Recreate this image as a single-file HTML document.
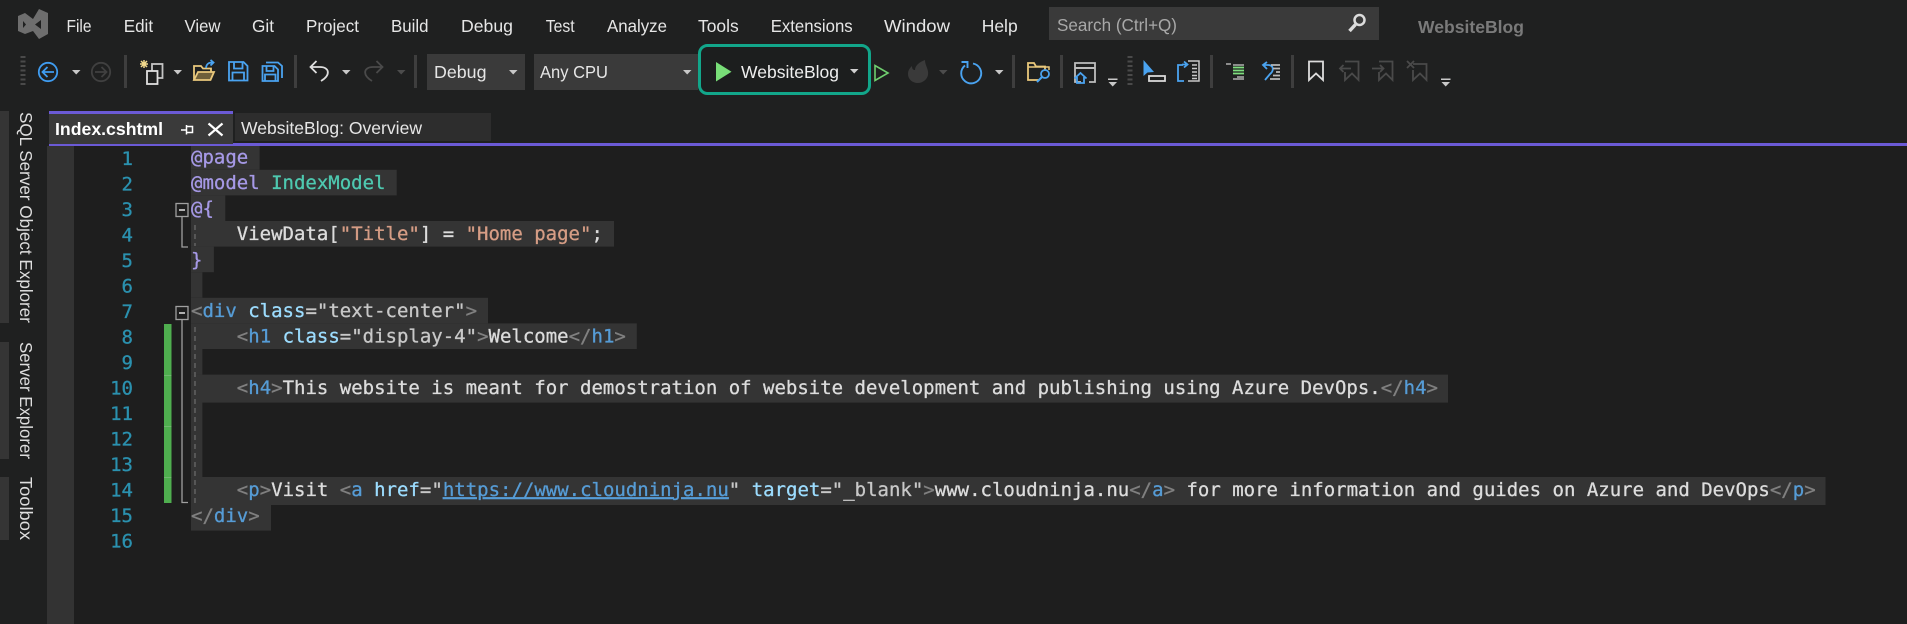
<!DOCTYPE html>
<html lang="en"><head><meta charset="utf-8"><title>WebsiteBlog</title>
<style>
html,body{margin:0;padding:0;background:#1f2020;width:1907px;height:624px;overflow:hidden}
svg{display:block}
.u{font-family:"Liberation Sans",sans-serif;font-size:17.5px;fill:#e6e6e6}
.m{font-family:"DejaVu Sans Mono","Liberation Mono",monospace;font-size:19px;fill:#dcdcdc;stroke:#dcdcdc;stroke-width:.3px}
.n{fill:#2b91af;stroke:#2b91af;text-anchor:end}
.t{fill:#808080;stroke:#808080}.k{fill:#569cd6;stroke:#569cd6}.a{fill:#9cdcfe;stroke:#9cdcfe}.s{fill:#c8c8c8;stroke:#c8c8c8}.r{fill:#a699e6;stroke:#a699e6}.c{fill:#4ec9b0;stroke:#4ec9b0}.q{fill:#d69d85;stroke:#d69d85}.l{fill:#569cd6;stroke:#569cd6;text-decoration:underline}
.sel{fill:#343434}
</style></head><body>
<svg xmlns="http://www.w3.org/2000/svg" width="1907" height="624" viewBox="0 0 1907 624">
<rect width="1907" height="624" fill="#1f2020"/>
<!-- logo -->
<path fill="#6e6e6e" fill-rule="evenodd" d="M39 9L48 13V34L39 39L33 31L25 34L18 31V16L25 13L33 19ZM23 21V28L26 24.500ZM41 20L35 24.500L41 29Z"/>
<!-- menu -->
<g class="u">
<text x="66.500" y="32" textLength="25" lengthAdjust="spacingAndGlyphs">File</text>
<text x="123.700" y="32" textLength="29.400" lengthAdjust="spacingAndGlyphs">Edit</text>
<text x="184.500" y="32" textLength="36" lengthAdjust="spacingAndGlyphs">View</text>
<text x="252" y="32" textLength="22" lengthAdjust="spacingAndGlyphs">Git</text>
<text x="306" y="32" textLength="53" lengthAdjust="spacingAndGlyphs">Project</text>
<text x="391" y="32" textLength="37.500" lengthAdjust="spacingAndGlyphs">Build</text>
<text x="461" y="32" textLength="52" lengthAdjust="spacingAndGlyphs">Debug</text>
<text x="545.700" y="32" textLength="29" lengthAdjust="spacingAndGlyphs">Test</text>
<text x="607" y="32" textLength="60" lengthAdjust="spacingAndGlyphs">Analyze</text>
<text x="698" y="32" textLength="40.700" lengthAdjust="spacingAndGlyphs">Tools</text>
<text x="770.700" y="32" textLength="82" lengthAdjust="spacingAndGlyphs">Extensions</text>
<text x="884" y="32" textLength="66" lengthAdjust="spacingAndGlyphs">Window</text>
<text x="981.700" y="32" textLength="36" lengthAdjust="spacingAndGlyphs">Help</text>
</g>
<!-- search -->
<rect x="1049" y="7" width="330" height="33" fill="#3a3a3a"/>
<text class="u" x="1057" y="31" textLength="120" lengthAdjust="spacingAndGlyphs" style="fill:#a8a8a8">Search (Ctrl+Q)</text>
<circle cx="1359.500" cy="20" r="5" fill="none" stroke="#dcdcdc" stroke-width="2.500"/>
<path d="M1355.500 24.500L1349.500 31" stroke="#dcdcdc" stroke-width="3.500" fill="none"/>
<text class="u" x="1418" y="33" textLength="106" lengthAdjust="spacingAndGlyphs" style="fill:#7a7a7a;font-weight:bold">WebsiteBlog</text>

<!-- toolbar grips -->
<g fill="none" stroke="#4a4a4a" stroke-width="5" stroke-dasharray="2 2.500">
<path d="M23 56V85"/><path d="M1130 56V85"/>
</g>
<!-- separators -->
<g fill="#3e3e3e">
<rect x="124" y="55" width="3" height="33"/><rect x="294" y="55" width="3" height="33"/><rect x="414" y="55" width="3" height="33"/>
<rect x="1012" y="55" width="3" height="33"/><rect x="1060" y="55" width="3" height="33"/><rect x="1210" y="55" width="3" height="33"/><rect x="1291" y="55" width="3" height="33"/>
</g>
<!-- back / forward -->
<g fill="none" stroke-width="1.800">
<circle cx="48" cy="72" r="9.200" stroke="#3f9cf0"/><path d="M54 72H43M47.500 67L42.500 72L47.500 77" stroke="#3f9cf0"/>
<circle cx="101" cy="72" r="9.200" stroke="#404040"/><path d="M95 72H106M101.500 67L106.500 72L101.500 77" stroke="#404040"/>
</g>
<!-- dropdown arrows -->
<g fill="#c8c8c8">
<path d="M72 70H80.500L76.200 74.500Z"/><path d="M173.500 70H182L177.700 74.500Z"/><path d="M342 70H350.500L346.200 74.500Z"/>
<path d="M995 70H1003.500L999.200 74.500Z"/>
<path d="M397 70H405.500L401.200 74.500Z" fill="#4c4c4c"/><path d="M939 70H947.500L943.200 74.500Z" fill="#4c4c4c"/>
<path d="M1108 78.500H1117.500V80H1108ZM1108.500 82H1117L1112.700 86.500Z"/><path d="M1441 78.500H1450.500V80H1441ZM1441.500 82H1450L1445.700 86.500Z"/>
</g>
<!-- new project -->
<g fill="none" stroke="#c4c4c4" stroke-width="1.800">
<rect x="152" y="64" width="10.500" height="14"/><rect x="147" y="71" width="10.500" height="13" fill="#1f2020" stroke="#e0e0e0"/>
</g>
<path d="M144 60V68M140 64H148M141 61L147 67M147 61L141 67" stroke="#f2d98c" stroke-width="1.500"/>
<!-- open folder -->
<path d="M194 80V66H201L203 68.500H211V72" fill="none" stroke="#e9c87c" stroke-width="1.800"/>
<path d="M194 80L198 72H214L210.500 80Z" fill="#6f5f3a" stroke="#e9c87c" stroke-width="1.800"/>
<path d="M206 68C206.500 63.500 209 62.500 213 62.500M210.500 60L213.500 62.500L210.500 65.500" fill="none" stroke="#4aa3f0" stroke-width="1.800"/>
<!-- save -->
<g fill="none" stroke="#4aa3f0" stroke-width="1.800">
<path d="M229 62H243.500L247.500 66V80.500H229Z"/><path d="M234 62V68.500H242.500V62M232.500 80.500V72.500H244V80.500"/>
<path d="M262.500 66H274.500L278 69.500V81H262.500Z"/><path d="M266.500 66V71H273.500V66M265 81V74.500H275.500V81"/>
<path d="M266 62.500H278L282 66V78"/>
</g>
<!-- undo / redo -->
<path d="M316.500 61L310.500 67L316.500 73M311 67H320C329.500 67 331 75 321 81" fill="none" stroke="#dedede" stroke-width="1.800"/>
<path d="M376.500 61L382.500 67L376.500 73M382 67H373C363.500 67 362 75 372 81" fill="none" stroke="#4a4a4a" stroke-width="1.800"/>
<!-- config dropdowns -->
<rect x="427" y="54" width="98" height="36" fill="#3a3a3a"/>
<rect x="534" y="54" width="164" height="36" fill="#3a3a3a"/>
<path d="M509 70H517.500L513.200 74.500Z" fill="#c8c8c8"/><path d="M683 70H691.500L687.200 74.500Z" fill="#c8c8c8"/>
<text class="u" x="434" y="78" textLength="52.500" lengthAdjust="spacingAndGlyphs">Debug</text>
<text class="u" x="540" y="78" textLength="68" lengthAdjust="spacingAndGlyphs">Any CPU</text>
<!-- run button -->
<rect x="699.500" y="45.500" width="170" height="48" rx="8" fill="#1c1e1e" stroke="#12a68a" stroke-width="3"/>
<path d="M716 62V81.500L731.500 71.700Z" fill="#78de78"/>
<text class="u" x="741" y="78" textLength="98" lengthAdjust="spacingAndGlyphs" style="fill:#eeeeee">WebsiteBlog</text>
<path d="M850 69H858.500L854.200 73.500Z" fill="#d0d0d0"/>
<path d="M875 65.500V80.500L888 73Z" fill="none" stroke="#6fcf6f" stroke-width="1.600"/>
<!-- flame -->
<path d="M925 60C925 66 929 69 928 75C927 80 922 83 918 83C912 83 908 79 908 74C908 70 910 68 912 66C912 69 913 70 915 70C915 66 919 62 925 60Z" fill="#3a3a3a"/>
<!-- refresh -->
<path d="M965 65.500A10 10 0 1 0 973 63.500" fill="none" stroke="#4aa3f0" stroke-width="1.900"/>
<path d="M961.500 62H967.500V68" fill="none" stroke="#4aa3f0" stroke-width="1.900"/>
<!-- folder search -->
<path d="M1045 72V66.500H1036L1034 63H1028V80H1039" fill="none" stroke="#e9c87c" stroke-width="1.800"/>
<path d="M1028 67H1049V70" fill="none" stroke="#e9c87c" stroke-width="1.500"/>
<circle cx="1045" cy="74" r="4" fill="#1f2020" stroke="#4aa3f0" stroke-width="1.800"/><path d="M1042 77L1037 82" stroke="#4aa3f0" stroke-width="2"/>
<!-- home window -->
<path d="M1081 82H1075V63H1095V82H1089" fill="none" stroke="#bdbdbd" stroke-width="1.800"/><path d="M1075 68H1095" stroke="#bdbdbd" stroke-width="2"/>
<path d="M1074.500 78.500L1080.500 73L1086.500 78.500M1077 77V83H1084V77" fill="none" stroke="#4aa3f0" stroke-width="1.800"/>
<!-- pointer -->
<path d="M1143.500 60V76L1147.500 72.500L1154 72Z" fill="#4aa3f0"/>
<rect x="1149" y="76" width="16" height="5" fill="none" stroke="#d8d8d8" stroke-width="1.800"/>
<!-- swap -->
<path d="M1183 65H1178V81H1184" fill="none" stroke="#4aa3f0" stroke-width="1.800"/>
<path d="M1186 64.500L1182 64.500M1184 61.500L1187.500 64.500L1184 67.500" fill="none" stroke="#4aa3f0" stroke-width="1.800"/>
<path d="M1188 61H1199V81H1188" fill="none" stroke="#c8c8c8" stroke-width="1.500"/>
<path d="M1192 65H1197M1192 68.500H1197M1192 72H1197M1192 75.500H1197M1192 78.500H1197" stroke="#c8c8c8" stroke-width="1.500"/>
<!-- indent -->
<path d="M1226 64H1231M1233 65H1244M1233 79H1244M1237 77H1244" stroke="#b0b0b0" stroke-width="1.600"/>
<path d="M1233 67.500H1244M1233 70.500H1244M1233 73.500H1244" stroke="#7ede7e" stroke-width="1.700"/>
<!-- undo list -->
<path d="M1267 62L1263 65L1267 69M1263 65H1268C1274 65 1274 71 1270 74L1265 80" fill="none" stroke="#4aa3f0" stroke-width="1.800"/>
<path d="M1271 65H1280M1273 68.500H1280M1276 72H1280M1273 75.500H1280M1270 79H1280" stroke="#b8b8b8" stroke-width="1.700"/>
<!-- bookmarks -->
<path d="M1309 61.500H1323V80L1316 73.500L1309 80Z" fill="none" stroke="#dcdcdc" stroke-width="1.800"/>
<g fill="none" stroke="#4a4a4a" stroke-width="1.800">
<path d="M1345 61.500H1358.500V80L1352 73.500L1345 80V72"/><path d="M1340 68.500H1351M1343.500 65L1340 68.500L1343.500 72"/>
<path d="M1379 61.500H1392.500V80L1386 73.500L1379 80V72"/><path d="M1372 68.500H1383M1380 65L1383.500 68.500L1380 72"/>
<path d="M1413 64H1426.500V80L1420 73.500L1413 80V70"/><path d="M1407 61L1414 68M1414 61L1407 68"/>
</g>

<!-- tab strip -->
<rect x="49" y="111" width="184" height="34" fill="#3a3a3a"/>
<rect x="49" y="111" width="184" height="3" fill="#6b5ad6"/>
<rect x="49" y="144" width="184" height="2" fill="#6b5ad6"/>
<rect x="235" y="113" width="256" height="28" fill="#2d2d2d"/>
<rect x="233" y="143" width="1674" height="3" fill="#6b5ad6"/>
<text class="u" x="55" y="135" textLength="108" lengthAdjust="spacingAndGlyphs" style="font-weight:bold;fill:#fff">Index.cshtml</text>
<text class="u" x="241" y="134" textLength="181" lengthAdjust="spacingAndGlyphs">WebsiteBlog: Overview</text>
<path d="M181 130H186.500M186.500 125V134.500M186.500 126.500H192.500V132.500H186.500" fill="none" stroke="#ffffff" stroke-width="1.500"/>
<path d="M208.500 123.500L222.500 135.500M222.500 123.500L208.500 135.500" stroke="#ffffff" stroke-width="2.200"/>

<!-- side tabs -->
<g fill="#353535"><rect x="0" y="111" width="9" height="212"/><rect x="0" y="342" width="9" height="117"/><rect x="0" y="477" width="9" height="63"/></g>
<g class="u" style="font-size:17.5px;fill:#dedede">
<text transform="translate(20 112) rotate(90)" textLength="211" lengthAdjust="spacingAndGlyphs">SQL Server Object Explorer</text>
<text transform="translate(20 342) rotate(90)" textLength="117" lengthAdjust="spacingAndGlyphs">Server Explorer</text>
<text transform="translate(20 477) rotate(90)" textLength="63" lengthAdjust="spacingAndGlyphs">Toolbox</text>
</g>

<!-- editor -->
<rect x="47" y="146" width="27" height="478" fill="#333333"/>
<rect x="74" y="146" width="1833" height="478" fill="#1e1e1e"/>
<!-- selection -->
<g class="sel">
<rect x="191" y="146" width="68.600" height="23.800"/>
<rect x="191" y="169.800" width="205.700" height="25.600"/>
<rect x="191" y="195.400" width="34.300" height="25.600"/>
<rect x="191" y="221" width="423" height="25.600"/>
<rect x="191" y="246.600" width="22.900" height="25.600"/>
<rect x="191" y="272.200" width="11.400" height="25.600"/>
<rect x="191" y="297.800" width="297" height="25.600"/>
<rect x="191" y="323.400" width="445.800" height="25.600"/>
<rect x="191" y="349" width="11.400" height="25.600"/>
<rect x="191" y="374.600" width="1257" height="28"/>
<rect x="191" y="400.200" width="11.400" height="76.800"/>
<rect x="191" y="477" width="1634.500" height="28"/>
<rect x="191" y="502.600" width="80" height="28"/>
</g>
<!-- change bar -->
<rect x="164" y="324" width="7.500" height="179" fill="#4fae4f"/>
<g fill="#6fb86f"><rect x="164" y="375" width="7.500" height="1"/><rect x="164" y="426" width="7.500" height="1"/><rect x="164" y="477" width="7.500" height="1"/></g>
<!-- fold -->
<g fill="none" stroke="#a0a0a0" stroke-width="1.300">
<rect x="176" y="203.500" width="12" height="13"/><rect x="176" y="306.500" width="12" height="13"/>
<path d="M182 217V247H188"/><path d="M182 320V502.500H188"/>
</g>
<path d="M179 210H185M179 313H185" stroke="#e0e0e0" stroke-width="1.500"/>
<path d="M195 225V246M195 327V503" stroke="#6a6a6a" stroke-width="1.300" stroke-dasharray="5 4" fill="none"/>

<!-- line numbers -->
<g class="m">
<text class="n" x="133" y="165">1</text>
<text class="n" x="133" y="190.500">2</text>
<text class="n" x="133" y="216">3</text>
<text class="n" x="133" y="241.500">4</text>
<text class="n" x="133" y="267">5</text>
<text class="n" x="133" y="292.500">6</text>
<text class="n" x="133" y="318">7</text>
<text class="n" x="133" y="343.500">8</text>
<text class="n" x="133" y="369">9</text>
<text class="n" x="133" y="394.500">10</text>
<text class="n" x="133" y="420">11</text>
<text class="n" x="133" y="445.500">12</text>
<text class="n" x="133" y="471">13</text>
<text class="n" x="133" y="496.500">14</text>
<text class="n" x="133" y="522">15</text>
<text class="n" x="133" y="547.500">16</text>
</g>
<!-- code -->
<g class="m">
<text x="191" y="163.400"><tspan class="r">@page</tspan></text>
<text x="191" y="189"><tspan class="r">@model</tspan> <tspan class="c">IndexModel</tspan></text>
<text x="191" y="214.600"><tspan class="r">@{</tspan></text>
<text x="236.800" y="240.200">ViewData[<tspan class="q">"Title"</tspan>] = <tspan class="q">"Home page"</tspan>;</text>
<text x="191" y="265.800"><tspan class="r">}</tspan></text>
<text x="191" y="317"><tspan class="t">&lt;</tspan><tspan class="k">div</tspan> <tspan class="a">class</tspan><tspan class="s">="text-center"</tspan><tspan class="t">&gt;</tspan></text>
<text x="236.800" y="342.600"><tspan class="t">&lt;</tspan><tspan class="k">h1</tspan> <tspan class="a">class</tspan><tspan class="s">="display-4"</tspan><tspan class="t">&gt;</tspan>Welcome<tspan class="t">&lt;/</tspan><tspan class="k">h1</tspan><tspan class="t">&gt;</tspan></text>
<text x="236.800" y="393.800"><tspan class="t">&lt;</tspan><tspan class="k">h4</tspan><tspan class="t">&gt;</tspan>This website is meant for demostration of website development and publishing using Azure DevOps.<tspan class="t">&lt;/</tspan><tspan class="k">h4</tspan><tspan class="t">&gt;</tspan></text>
<text x="236.800" y="496.200"><tspan class="t">&lt;</tspan><tspan class="k">p</tspan><tspan class="t">&gt;</tspan>Visit <tspan class="t">&lt;</tspan><tspan class="k">a</tspan> <tspan class="a">href</tspan><tspan class="s">="</tspan><tspan class="l">https://www.cloudninja.nu</tspan><tspan class="s">"</tspan> <tspan class="a">target</tspan><tspan class="s">="_blank"</tspan><tspan class="t">&gt;</tspan>www.cloudninja.nu<tspan class="t">&lt;/</tspan><tspan class="k">a</tspan><tspan class="t">&gt;</tspan> for more information and guides on Azure and DevOps<tspan class="t">&lt;/</tspan><tspan class="k">p</tspan><tspan class="t">&gt;</tspan></text>
<text x="191" y="521.800"><tspan class="t">&lt;/</tspan><tspan class="k">div</tspan><tspan class="t">&gt;</tspan></text>
</g>
</svg>
</body></html>
